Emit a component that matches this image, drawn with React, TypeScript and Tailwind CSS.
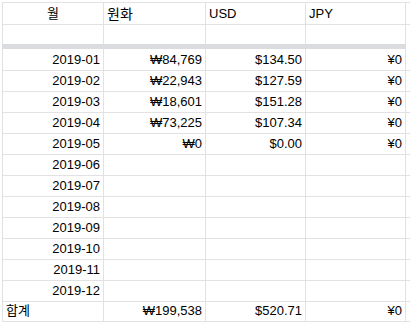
const rows = [
  ["2019-01", "₩84,769", "$134.50", "¥0"],
  ["2019-02", "₩22,943", "$127.59", "¥0"],
  ["2019-03", "₩18,601", "$151.28", "¥0"],
  ["2019-04", "₩73,225", "$107.34", "¥0"],
  ["2019-05", "₩0", "$0.00", "¥0"],
  ["2019-06", "", "", ""],
  ["2019-07", "", "", ""],
  ["2019-08", "", "", ""],
  ["2019-09", "", "", ""],
  ["2019-10", "", "", ""],
  ["2019-11", "", "", ""],
  ["2019-12", "", "", ""],
];

const cols = "grid grid-cols-[101px_102px_100px_101px]";
const cell = "border-l border-[#e2e2e2] px-[3px] flex items-end pb-[2px] overflow-hidden whitespace-nowrap";

export default function App() {
  return (
    <div
      className="w-[410px] h-[324px] bg-white overflow-hidden pl-[2px] pt-[2px] text-[13px] leading-[16px] text-black"
      style={{ fontFamily: '"Liberation Sans", Arial, "Noto Sans CJK KR", sans-serif' }}
    >
      {/* header */}
      <div className={`${cols} h-[22px] border-t border-[#e2e2e2]`}>
        <div className={`${cell} justify-center border-[#c6c6c6]`}>월</div>
        <div className={`${cell} text-[14px]`}>원화</div>
        <div className={cell}>USD</div>
        <div className={`${cell} border-r`}>JPY</div>
      </div>
      <div className={`${cols} h-[20px] border-t border-[#e2e2e2]`}>
        <div className={`${cell} border-[#c6c6c6]`} />
        <div className={cell} />
        <div className={cell} />
        <div className={`${cell} border-r`} />
      </div>
      {/* frozen separator */}
      <div className="h-[5px] w-[404px] bg-[#dadce0]" />

      {rows.map((r, i) => (
        <div key={r[0]} className={`${cols} h-[21px] ${i > 0 ? "border-t border-[#e2e2e2]" : ""}`}>
          <div className={`${cell} justify-end border-[#c6c6c6]`}>{r[0]}</div>
          <div className={`${cell} justify-end`}>{r[1]}</div>
          <div className={`${cell} justify-end`}>{r[2]}</div>
          <div className={`${cell} justify-end border-r`}>{r[3]}</div>
        </div>
      ))}

      <div className={`${cols} h-[21px] border-t border-b border-[#e2e2e2]`}>
        <div className={`${cell} border-[#c6c6c6]`}>합계</div>
        <div className={`${cell} justify-end`}>₩199,538</div>
        <div className={`${cell} justify-end`}>$520.71</div>
        <div className={`${cell} justify-end border-r`}>¥0</div>
      </div>
    </div>
  );
}
